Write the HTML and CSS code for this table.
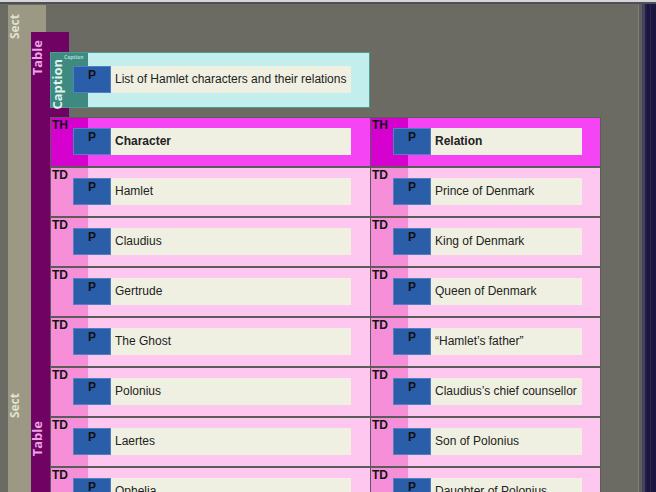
FILE: index.html
```html
<!DOCTYPE html>
<html lang="en">
<head>
<meta charset="utf-8">
<title>Hamlet table structure</title>
<link rel="stylesheet" href="styles.css">
</head>
<body>
<div class="screen">
  <div class="desk">
    <div class="canvas">
      <section class="sect">
        <span class="vlabel sect-label">Sect</span>
        <span class="vlabel sect-label repeat">Sect</span>
        <div class="tbl">
          <span class="vlabel table-label">Table</span>
          <span class="vlabel table-label repeat">Table</span>
          <div class="tbl-body">
            <div class="caption">
              <span class="vlabel cap-label">Caption</span>
              <span class="cap-tag">Caption</span>
              <div class="p">P</div>
              <div class="txt">List of Hamlet characters and their relations</div>
            </div>
            <div class="grid">
              <div class="cell th"><span class="tag">TH</span><div class="p">P</div><div class="txt bold">Character</div></div>
              <div class="cell th"><span class="tag">TH</span><div class="p">P</div><div class="txt bold">Relation</div></div>
              <div class="cell td"><span class="tag">TD</span><div class="p">P</div><div class="txt">Hamlet</div></div>
              <div class="cell td"><span class="tag">TD</span><div class="p">P</div><div class="txt">Prince of Denmark</div></div>
              <div class="cell td"><span class="tag">TD</span><div class="p">P</div><div class="txt">Claudius</div></div>
              <div class="cell td"><span class="tag">TD</span><div class="p">P</div><div class="txt">King of Denmark</div></div>
              <div class="cell td"><span class="tag">TD</span><div class="p">P</div><div class="txt">Gertrude</div></div>
              <div class="cell td"><span class="tag">TD</span><div class="p">P</div><div class="txt">Queen of Denmark</div></div>
              <div class="cell td"><span class="tag">TD</span><div class="p">P</div><div class="txt">The Ghost</div></div>
              <div class="cell td"><span class="tag">TD</span><div class="p">P</div><div class="txt">“Hamlet’s father”</div></div>
              <div class="cell td"><span class="tag">TD</span><div class="p">P</div><div class="txt">Polonius</div></div>
              <div class="cell td"><span class="tag">TD</span><div class="p">P</div><div class="txt">Claudius’s chief counsellor</div></div>
              <div class="cell td"><span class="tag">TD</span><div class="p">P</div><div class="txt">Laertes</div></div>
              <div class="cell td"><span class="tag">TD</span><div class="p">P</div><div class="txt">Son of Polonius</div></div>
              <div class="cell td"><span class="tag">TD</span><div class="p">P</div><div class="txt">Ophelia</div></div>
              <div class="cell td"><span class="tag">TD</span><div class="p">P</div><div class="txt">Daughter of Polonius</div></div>
            </div>
          </div>
        </div>
      </section>
    </div>
    <div class="edge"></div>
  </div>
</div>
</body>
</html>
```
FILE: styles.css
```css
html, body {
  margin: 0;
  padding: 0;
  background: #6b6b64;
}

.screen {
  width: 656px;
  height: 492px;
  overflow: hidden;
  display: flex;
  flex-direction: column;
  box-sizing: border-box;
  border-top: 2px solid #d6d6d6;
  background: #6b6b64;
}

.desk {
  flex: 1;
  display: flex;
  min-height: 0;
  border-top: 2px solid #4f4f57;
}

.canvas {
  flex: 1;
  display: flex;
  padding: 1px 0 0 8px;
  min-height: 0;
}

.edge {
  width: 17px;
  flex: none;
  background: linear-gradient(to right,
    #5d5d61 0 3px,
    #45435a 3px 6px,
    #221e46 6px 8px,
    #1a1640 8px 11px,
    #2a2750 11px 12px,
    #1a1640 12px);
}

.sect {
  position: relative;
  flex: 1;
  display: flex;
  align-items: flex-start;
  background: linear-gradient(to right, #9b9984 38px, #6b6b64 38px);
  border-right: 1px solid #7d7d76;
}

.vlabel {
  writing-mode: vertical-rl;
  transform: rotate(180deg);
  font: 700 13px/13px "Open Sans", "DejaVu Sans", sans-serif;
  white-space: nowrap;
  flex: none;
}

.sect-label {
  font-size: 12px;
  color: #e2e0d1;
  margin: 9px 10px 0 0;
}

.table-label {
  color: #eaa6e2;
  margin: 8px 6px 0 0;
}

.repeat {
  position: absolute;
  left: 0;
  margin: 0;
}

.sect-label.repeat { top: 388px; }
.table-label.repeat { top: 389px; }

.tbl {
  position: relative;
  display: flex;
  align-items: flex-start;
  margin-top: 27px;
  background: linear-gradient(to right, #6f0262 38px, transparent 38px);
}

.tbl-body {
  margin-top: 20px;
}

.caption {
  position: relative;
  display: flex;
  align-items: flex-start;
  width: 320px;
  height: 56px;
  box-sizing: border-box;
  padding-right: 18px;
  border: 1px solid #4f9a92;
  background: linear-gradient(to right, #3f8a80 37px, #c2efee 37px);
  margin-bottom: 9px;
}

.cap-label {
  color: #def2ee;
  margin: 6px 9px 0 0;
}

.cap-tag {
  position: absolute;
  left: 13px;
  top: 1px;
  font: 700 5px/6px "Open Sans", sans-serif;
  color: #a8dcd5;
}

.caption .p,
.caption .txt {
  margin-top: 13px;
}

.grid {
  display: grid;
  grid-template-columns: 320px 231px;
  grid-auto-rows: 50px;
}

.cell {
  box-sizing: border-box;
  display: flex;
  align-items: flex-start;
  padding: 1px 19px 0 1px;
  border-top: 1px solid #5b5b5b;
  border-bottom: 1px solid #5b5b5b;
  border-left: 1px solid #5b5b5b;
}

.cell:nth-child(2n) {
  border-right: 1px solid #5b5b5b;
  padding-right: 18px;
}

.th {
  background: linear-gradient(to right, #d600cf 37px, #f444f4 37px);
}

.td {
  background: linear-gradient(to right, #f68fd7 37px, #fec7ef 37px);
}

.tag {
  width: 21px;
  flex: none;
  font: 700 12px/13px "Liberation Sans", Arial, sans-serif;
  color: #141414;
}

.p {
  width: 38px;
  height: 27px;
  box-sizing: border-box;
  flex: none;
  margin-top: 9px;
  background: #2a5ea9;
  border: 1px solid #4f80c4;
  text-align: center;
  font: 700 12px/17px "Liberation Sans", Arial, sans-serif;
  color: #111;
}

.txt {
  flex: 1;
  min-width: 0;
  height: 27px;
  margin-top: 9px;
  padding-left: 4px;
  background: #eff0e1;
  font: 400 12px/27px "Liberation Sans", Arial, sans-serif;
  color: #222;
  white-space: nowrap;
  overflow: hidden;
}

.txt.bold {
  font-weight: 700;
}
```
